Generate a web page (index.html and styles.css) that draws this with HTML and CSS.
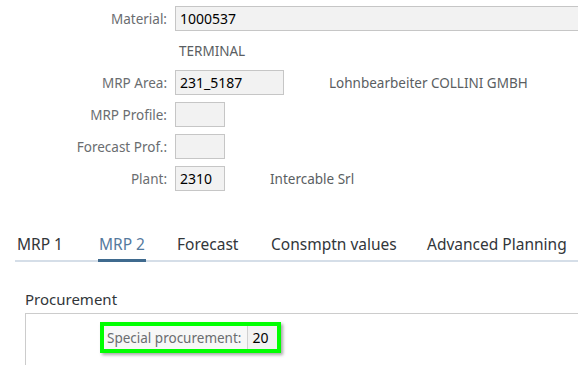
FILE: index.html
```html
<!DOCTYPE html>
<html>
<head>
<meta charset="utf-8">
<link rel="stylesheet" href="styles.css">
</head>
<body>
<div class="page">
  <div class="form">
    <div class="row">
      <label class="lbl">Material:</label>
      <div class="field field-wide">1000537</div>
    </div>
    <div class="row">
      <span class="lbl"></span>
      <span class="desc desc-first">TERMINAL</span>
    </div>
    <div class="row">
      <label class="lbl">MRP Area:</label>
      <div class="field field-mid">231_5187</div>
      <span class="desc desc-area">Lohnbearbeiter COLLINI GMBH</span>
    </div>
    <div class="row">
      <label class="lbl">MRP Profile:</label>
      <div class="field field-small"></div>
    </div>
    <div class="row">
      <label class="lbl">Forecast Prof.:</label>
      <div class="field field-small"></div>
    </div>
    <div class="row">
      <label class="lbl">Plant:</label>
      <div class="field field-small">2310</div>
      <span class="desc desc-plant">Intercable Srl</span>
    </div>
  </div>

  <div class="tabs">
    <div class="tab tab-1">MRP 1</div>
    <div class="tab tab-2 tab-active">MRP 2</div>
    <div class="tab tab-3">Forecast</div>
    <div class="tab tab-4">Consmptn values</div>
    <div class="tab tab-5">Advanced Planning</div>
  </div>

  <div class="group">
    <div class="group-title">Procurement</div>
    <div class="group-box">
      <div class="highlight">
        <span class="hl-label">Special procurement:</span>
        <span class="hl-field">20</span>
      </div>
    </div>
  </div>
</div>
</body>
</html>
```
FILE: styles.css
```css
html, body {
  margin: 0;
  padding: 0;
  background: #ffffff;
  overflow: hidden;
}
body {
  width: 578px;
  height: 365px;
  font-family: "Noto Sans", "Open Sans", sans-serif;
}
.page {
  padding-top: 6px;
  width: 578px;
  overflow: hidden;
}
.form {
  display: flex;
  flex-direction: column;
  gap: 7px;
}
.row {
  display: flex;
  align-items: center;
  height: 25px;
}
.lbl {
  width: 167px;
  flex: none;
  text-align: right;
  font-size: 13.5px;
  color: #6a6d70;
  margin-right: 8px;
}
.field {
  box-sizing: border-box;
  height: 25px;
  border: 1px solid #c6c6c6;
  background: #f2f2f2;
  font-size: 14px;
  color: #000;
  padding: 0 4px;
  line-height: 23px;
  flex: none;
}
.field-wide { width: 403px; border-right: none; }
.field-mid { width: 109px; }
.field-small { width: 50px; }
.desc {
  font-size: 13.5px;
  color: #5a5e62;
  white-space: nowrap;
}
.desc-first { margin-left: 4px; }
.desc-area { margin-left: 45px; }
.desc-plant { margin-left: 45px; }

.tabs {
  margin: 39px 0 0 15px;
  display: flex;
  border-bottom: 2px solid #d5dee8;
  height: 32px;
  box-sizing: border-box;
}
.tab {
  flex: none;
  white-space: nowrap;
  font-size: 15.5px;
  color: #32363a;
  line-height: 28px;
  position: relative;
}
.tab-1 { margin-left: 2px; width: 81px; }
.tab-2 { width: 48px; margin-right: 31px; text-align: center; }
.tab-3 { width: 94px; }
.tab-4 { width: 156px; }
.tab-active {
  color: #557a9e;
}
.tab-active::after {
  content: "";
  position: absolute;
  left: 0;
  right: 0;
  bottom: -2px;
  height: 3px;
  background: #3f6a8e;
}

.group {
  margin: 27px 0 0 25px;
}
.group-title {
  font-size: 15px;
  color: #32363a;
  line-height: 20px;
  margin-bottom: 4px;
}
.group-box {
  border-top: 1px solid #cccccc;
  border-left: 1px solid #cccccc;
  height: 60px;
  padding: 8px 0 0 74px;
  box-sizing: border-box;
}
.highlight {
  display: inline-flex;
  align-items: center;
  border: 4px solid #00ff00;
  box-shadow: 2px 2px 3px rgba(0,0,0,0.35);
  background: #f7f7f7;
  height: 31px;
  box-sizing: border-box;
  padding-left: 3px;
}
.hl-label {
  font-size: 13.5px;
  color: #6a6d70;
  padding-right: 6px;
}
.hl-field {
  border-left: 1px solid #d0d0d0;
  background: #f2f2f2;
  font-size: 14px;
  color: #000;
  padding: 0 4px;
  width: 21px;
  height: 23px;
  line-height: 23px;
}
```
